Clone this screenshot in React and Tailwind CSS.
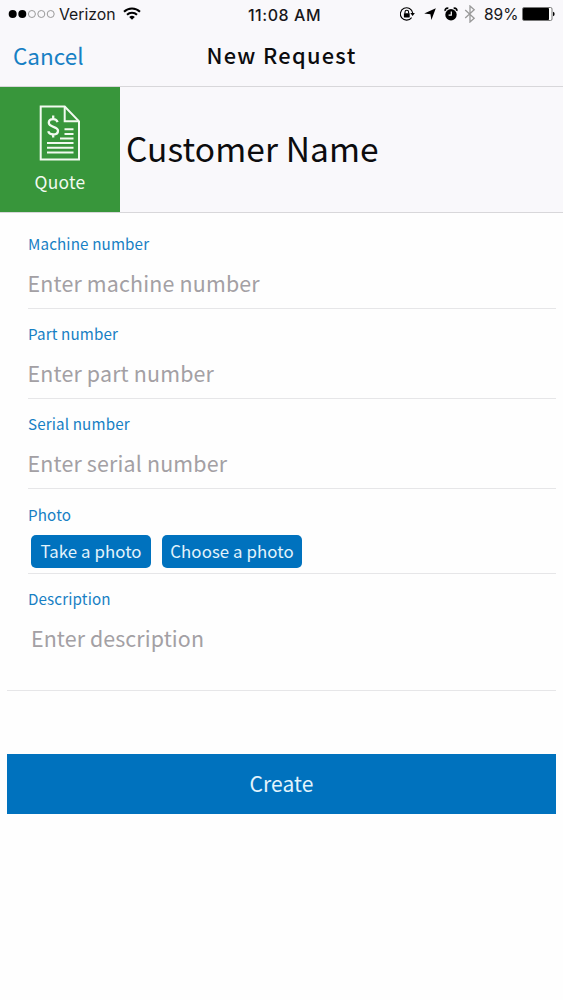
// src/App.js
import React, { useState } from "react";

const StatusBar = () => (
  <div className="flex h-7 items-center justify-between pl-[8px] pr-[8px] font-['Inter',sans-serif] text-[15.5px] leading-7 text-[#17171a]">
    <div className="flex w-[200px] items-center">
      <svg width="48" height="12" viewBox="0 0 48 12">
        <circle cx="4.7" cy="6" r="4" fill="#000" />
        <circle cx="14.3" cy="6" r="4" fill="#000" />
        <circle cx="23.9" cy="6" r="3.5" fill="none" stroke="#999" />
        <circle cx="33.3" cy="6" r="3.5" fill="none" stroke="#999" />
        <circle cx="42.7" cy="6" r="3.5" fill="none" stroke="#999" />
      </svg>
      <span className="ml-[3px] pt-[1px] text-[15.8px]">Verizon</span>
      <svg className="-mt-[1px] ml-[7px]" width="18" height="13" viewBox="0 0 18 13">
        <path d="M1 4.7a11.3 11.3 0 0 1 16 0" fill="none" stroke="#000" strokeWidth="2" />
        <path d="M4 7.8a7.1 7.1 0 0 1 10 0" fill="none" stroke="#000" strokeWidth="2" />
        <path d="M6.2 10a4 4 0 0 1 5.6 0L9 12.8z" fill="#000" />
      </svg>
    </div>
    <span className="-mr-[6px] whitespace-nowrap pt-[1px] text-[16px] font-medium tracking-[0.55px]">11:08 AM</span>
    <div className="flex w-[200px] items-center justify-end">
      {/* rotation lock */}
      <svg width="16" height="14" viewBox="0 0 16 14">
        <path d="M11.6 10.6A6.2 6.2 0 1 1 12.7 6" fill="none" stroke="#000" strokeWidth="1.1" />
        <path d="M10.3 6h4.6l-2.3 3z" fill="#000" />
        <rect x="3.9" y="6.2" width="5.8" height="4.2" rx="0.4" fill="#000" />
        <path d="M5 6.5V5a1.8 1.8 0 0 1 3.6 0v1.5" fill="none" stroke="#000" strokeWidth="1.1" />
      </svg>
      <svg className="ml-[8px]" width="12" height="12" viewBox="0 0 12 12">
        <path d="M11.8.3 7.4 11.9 6.4 6.2 .2 5.6z" fill="#000" />
      </svg>
      {/* alarm */}
      <svg className="ml-[8px]" width="14" height="14" viewBox="0 0 14 14">
        <circle cx="7" cy="7.8" r="5.7" fill="#000" />
        <path d="M1.4 3.9A2 2 0 0 1 4.3 1.5M12.6 3.9A2 2 0 0 0 9.7 1.5" fill="none" stroke="#000" strokeWidth="1.8" />
        <path d="M7.3 4.4v3.8H4.6" fill="none" stroke="#fff" strokeWidth="1.2" />
      </svg>
      <svg className="ml-[6px]" width="12" height="18" viewBox="0 0 12 18">
        <path d="m1.2 5 9 8.2L6 17V1l4.2 3.8-9 8.2" fill="none" stroke="#999" strokeWidth="1.3" />
      </svg>
      <span className="ml-[8px] w-[35px] whitespace-nowrap pt-[1px]">89%</span>
      <svg className="ml-[3px]" width="33" height="14" viewBox="0 0 33 14">
        <rect x="0.5" y="0.5" width="29.5" height="13" rx="1.5" fill="#fff" stroke="#777" />
        <rect x="1" y="1" width="26" height="12" rx="0.8" fill="#000" />
        <path d="M31 4.8a2.3 2.3 0 0 1 0 4.4z" fill="#000" />
      </svg>
    </div>
  </div>
);

const QuoteIcon = () => (
  <svg width="42" height="56" viewBox="0 0 42 56" fill="none" stroke="#f2faf0" strokeWidth="2">
    <path d="M1.7 1.5h24L40 16.3v38.2H1.7z" />
    <path d="M25.7 1.5v14.8H40" />
    <path d="M25.5 24.2h9M25.5 28.9h9M21 33.5h13.5M8 38h26.5M8 42.7h26.5M8 47.5h26.5" />
    <path d="M18.6 17.2c-.6-1.9-2.2-3-4.4-3-2.7 0-4.4 1.4-4.4 3.6 0 5 9.2 3 9.2 8 0 2.3-1.9 3.7-4.8 3.7-2.5 0-4.4-1.2-5-3.3M14.2 10.6v3.6M14.2 29.5v3" strokeWidth="2.3" />
  </svg>
);

const Field = ({ label, placeholder, value, onChange }) => (
  <div className="ml-[28px] mr-[7px] h-[90px] border-b border-[#e6e6e8] pt-[14px]">
    <label className="block text-[15.2px] leading-[20px] tracking-[0.13px] text-[#1780c4]">{label}</label>
    <input
      type="text"
      value={value}
      onChange={(e) => onChange(e.target.value)}
      placeholder={placeholder}
      className="-ml-[0.5px] mt-[14px] block h-[32px] w-full text-[21.4px] leading-[32px] tracking-[0.17px] outline-none placeholder:text-[#a3a0a4]"
    />
  </div>
);

const App = () => {
  const [machine, setMachine] = useState("");
  const [part, setPart] = useState("");
  const [serial, setSerial] = useState("");
  const [description, setDescription] = useState("");

  return (
    <div className="min-h-screen bg-[#fefefe] font-['Noto_Sans_CJK_SC','Noto_Sans',sans-serif]">
      <header className="h-[87px] border-b border-[#d8d7da] bg-[#f9f8fb]">
        <StatusBar />
        <div className="grid h-[56px] grid-cols-3 items-center">
          <button className="pl-[13px] text-left text-[22.5px] text-[#1780c4]">Cancel</button>
          <h1 className="-mt-[1px] whitespace-nowrap text-center text-[21.8px] font-medium tracking-[1.3px] text-[#0c0c0e]">
            New Request
          </h1>
        </div>
      </header>

      <div className="flex h-[126px] border-b border-[#d8d7da] bg-[#f9f8fb]">
        <div className="flex w-[120px] flex-col items-center bg-[#38963b] pt-[18px] text-[17.4px] leading-[24px] tracking-[0.3px] text-[#f2faf0]">
          <QuoteIcon />
          <span className="mt-[9px]">Quote</span>
        </div>
        <h2 className="-mt-[3px] ml-[6px] self-center text-[33.5px] leading-[44px] tracking-[0.1px] text-[#0c0c0e]">
          Customer Name
        </h2>
      </div>

      <div className="pt-[6px]">
        <Field label="Machine number" placeholder="Enter machine number" value={machine} onChange={setMachine} />
        <Field label="Part number" placeholder="Enter part number" value={part} onChange={setPart} />
        <Field label="Serial number" placeholder="Enter serial number" value={serial} onChange={setSerial} />
      </div>

      <div className="ml-[28px] mr-[7px] h-[85px] border-b border-[#e6e6e8] pt-[15px]">
        <div className="text-[15.2px] leading-[20px] tracking-[0.13px] text-[#1780c4]">Photo</div>
        <div className="ml-[3px] mt-[11px] flex gap-[11px] text-[16.8px] leading-[33px] tracking-[0.1px] text-[#e3f4fc]">
          <button className="h-[33px] w-[120px] rounded-[5px] bg-[#0072be]">Take a photo</button>
          <button className="h-[33px] w-[140px] rounded-[5px] bg-[#0072be]">Choose a photo</button>
        </div>
      </div>

      <div className="ml-[7px] mr-[7px] h-[117px] border-b border-[#e6e6e8] pl-[21px] pt-[14px]">
        <label className="block text-[15.2px] leading-[20px] tracking-[0.13px] text-[#1780c4]">Description</label>
        <textarea
          value={description}
          onChange={(e) => setDescription(e.target.value)}
          placeholder="Enter description"
          className="ml-[3px] mt-[15px] block h-[50px] w-[500px] resize-none text-[21.4px] leading-[30px] tracking-[0.1px] outline-none placeholder:text-[#a3a0a4]"
        />
      </div>

      <div className="px-[7px] pt-[63px]">
        <button className="h-[60px] w-full bg-[#0072be] pb-[1px] text-[21px] tracking-[0.1px] text-[#e3f4fc]">Create</button>
      </div>
    </div>
  );
};

export default App;
